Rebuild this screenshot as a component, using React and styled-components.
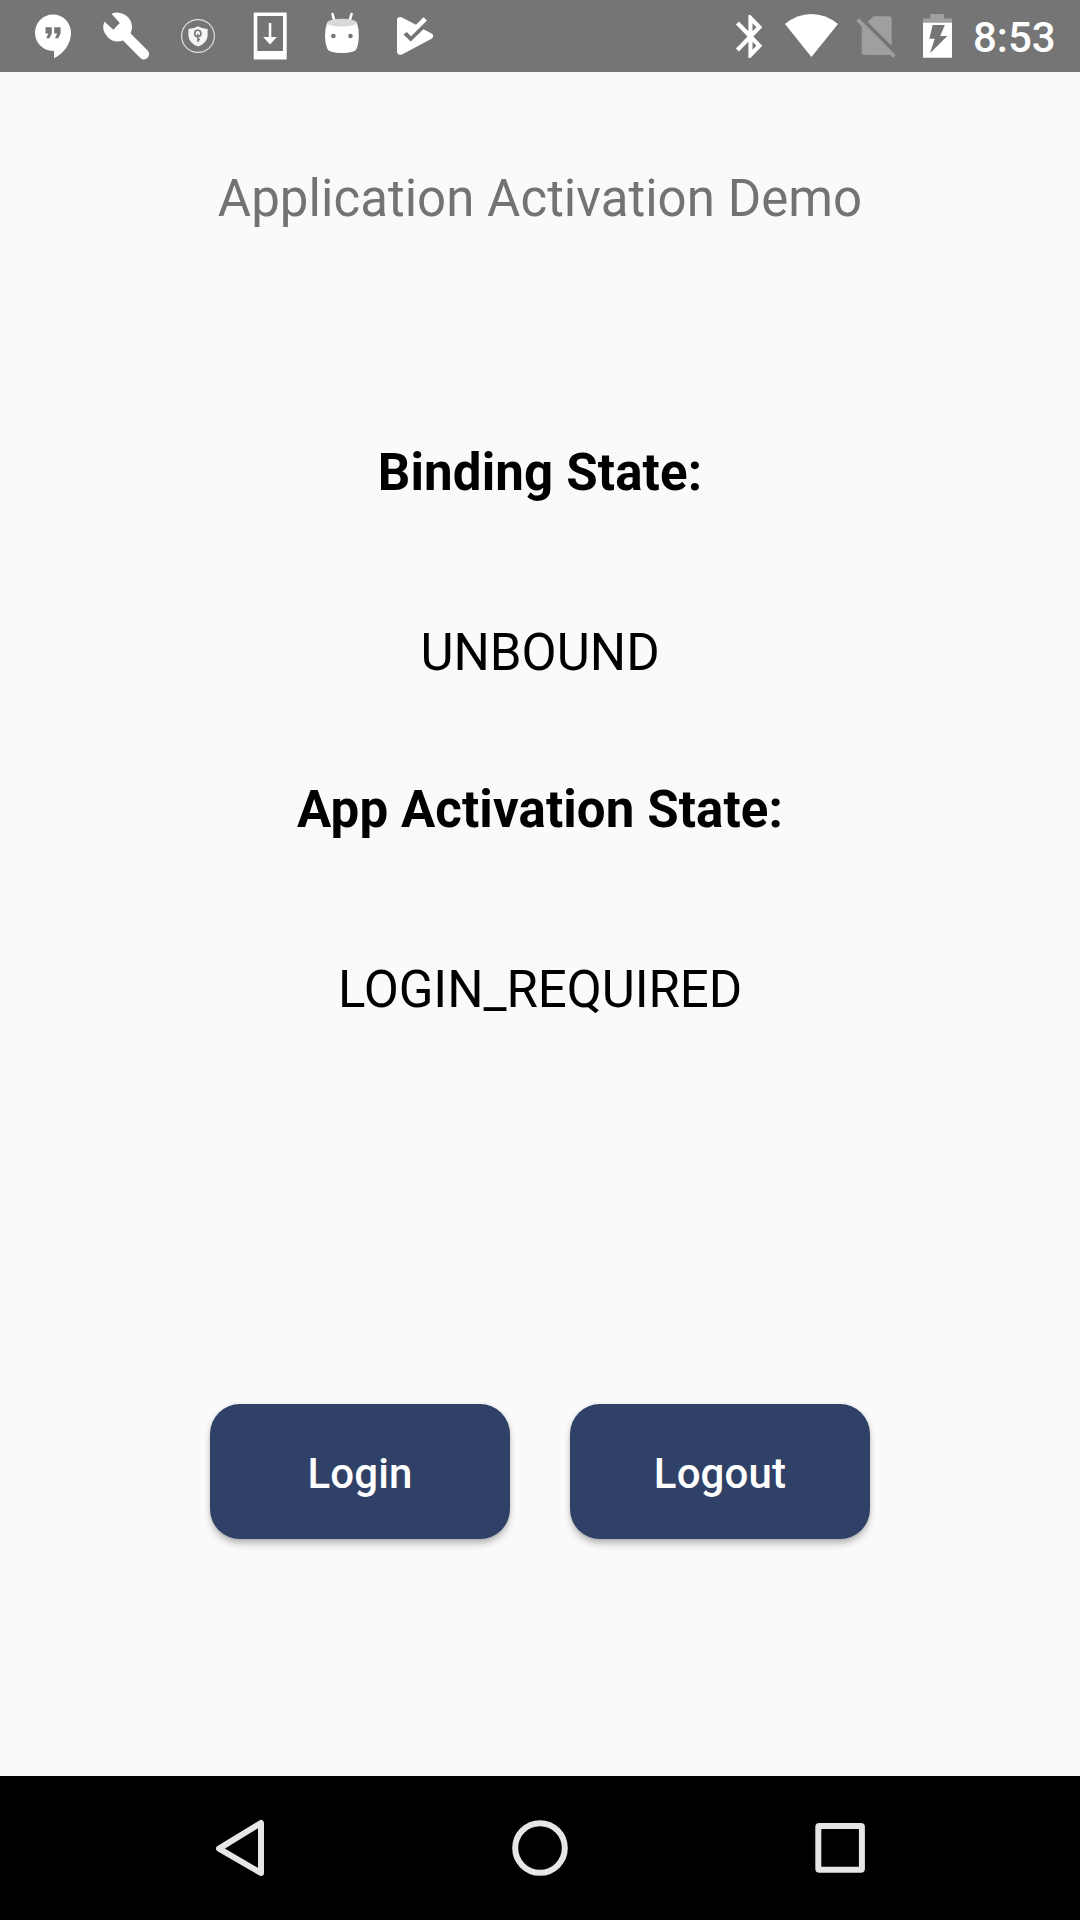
import React from "react";
import styled, { createGlobalStyle } from "styled-components";

const GlobalStyle = createGlobalStyle`
  body { margin: 0; background: #fafafa; }
  *, *::before, *::after { box-sizing: border-box; }
`;

const Screen = styled.div`
  display: flex;
  flex-direction: column;
  width: 1080px;
  height: 1920px;
  background: #fafafa;
  font-family: Roboto, sans-serif;
  overflow: hidden;
`;

const StatusBar = styled.header`
  display: flex;
  align-items: center;
  justify-content: space-between;
  height: 72px;
  padding: 0 26px 0 17px;
  background: #757575;
`;

const IconGroup = styled.div`
  display: flex;
  align-items: center;
`;

const BarIcon = styled.svg`
  display: block;
  flex: none;
  width: ${(p) => p.$w || 72}px;
  height: 72px;
  fill: #fff;
`;

const Clock = styled.time`
  width: 81px;
  margin-left: 14px;
  padding-top: 3px;
  color: #fff;
  font-size: 42px;
  font-weight: 500;
  line-height: 49px;
  white-space: nowrap;
`;

const Content = styled.main`
  flex: 1;
  display: flex;
  flex-direction: column;
  align-items: center;
`;

const Line = styled.p`
  margin: ${(p) => p.$top}px 0 0;
  font-size: 51px;
  line-height: 60px;
  font-weight: ${(p) => (p.$bold ? 700 : 400)};
  letter-spacing: ${(p) => p.$track || 0}px;
  color: ${(p) => p.$color || "#000"};
  white-space: nowrap;
`;

const Actions = styled.div`
  display: flex;
  gap: 60px;
  margin-top: 384px;
`;

const Button = styled.button`
  width: 300px;
  height: 135px;
  padding: 4px 0 0;
  border: 0;
  border-radius: 30px;
  background: #304167;
  color: #fff;
  font: 500 42px/50px Roboto, sans-serif;
  letter-spacing: 0.15px;
  box-shadow: 0 6px 8px -2px rgba(0, 0, 0, 0.28), 0 1px 5px rgba(0, 0, 0, 0.12);
`;

const NavBar = styled.nav`
  display: flex;
  align-items: center;
  justify-content: space-between;
  height: 144px;
  padding: 0 204px;
  background: #000;
`;

const NavIcon = styled.svg`
  display: block;
  width: 72px;
  height: 72px;
  fill: none;
  stroke: #e6e6e6;
  stroke-width: 6;
  stroke-linejoin: round;
`;

export default function App() {
  return (
    <Screen>
      <GlobalStyle />
      <StatusBar>
        <IconGroup>
          <BarIcon viewBox="17 0 72 72">
            <path d="M53 14.6C43 14.6 35 22.8 35 32.8S43 51 53 51H54V58.3C64 53.5 71 43.5 71 32.8C71 22.8 63 14.6 53 14.6Z" />
            <path fill="#757575" d="M45.5 27.3H51.8V33.5L49.4 38.3H46.2L48.4 33.6H45.5ZM54.2 27.3H60.6V33.5L58.2 38.3H55L57.2 33.6H54.2Z" />
          </BarIcon>
          <BarIcon viewBox="89 0 72 72">
            <path d="M111.5 13.8A14.7 14.7 0 0 1 130.6 33.6L147.6 50.6Q150.4 53.8 148 57.5Q144.2 61 140.6 58.2L123 40.6A14.7 14.7 0 0 1 104.3 21.6L113.3 29.8L119.8 23Z" />
          </BarIcon>
          <BarIcon viewBox="161 0 72 72">
            <circle cx="198" cy="36" r="16.4" fill="none" stroke="#e0e0e0" strokeWidth="1.2" />
            <path fill="#f5f5f5" d="M198 26.3Q202.5 29 207.6 29V36Q207 43.2 198 46.6Q189 43.2 188.4 36V29Q193.5 29 198 26.3Z" />
            <circle cx="197.8" cy="33.4" r="3.1" fill="none" stroke="#757575" strokeWidth="1.6" />
            <path fill="none" stroke="#757575" strokeWidth="1.5" d="M197.9 34V42M198 39.6H200" />
          </BarIcon>
          <BarIcon viewBox="233 0 72 72">
            <path fillRule="evenodd" d="M254.5 12.4H286Q286.7 12.4 286.7 13.2V58.8Q286.7 59.6 286 59.6H254.5Q253.7 59.6 253.7 58.8V13.2Q253.7 12.4 254.5 12.4ZM257.3 16V51H283V16Z" />
            <path d="M268.8 23H271.3V37H276.8L270 44.4L263.2 37H268.8Z" />
          </BarIcon>
          <BarIcon viewBox="305 0 72 72">
            <path stroke="#fff" strokeWidth="2.6" strokeLinecap="round" d="M332.5 14L334.5 21.5M351.6 14L349.4 21.5" />
            <path d="M327.3 22.5Q342 28 356.8 22.5Q359 28 358.8 36Q358.8 43 356.8 48.6Q355.5 53 342 53Q328.5 53 327.2 48.6Q325 43 325 36Q325 28 327.3 22.5Z" />
            <ellipse cx="342" cy="22.7" rx="14.8" ry="3.9" fill="#d8d8d8" />
            <circle cx="333.4" cy="36" r="2.3" fill="#757575" />
            <circle cx="350.5" cy="36" r="2.3" fill="#757575" />
          </BarIcon>
          <BarIcon viewBox="377 0 72 72">
            <path d="M397 19Q398 16.4 401.5 17.2L416 24.8L423.6 17.2L427 20.4L411 36.2L406.8 32L403.4 34.6L410.8 41.6L423.4 29.3L432 33.8Q434.4 36 432 38.4L402 54.4Q398 55.5 397 52.5Z" />
          </BarIcon>
        </IconGroup>
        <IconGroup>
          <BarIcon $w={60} viewBox="719 0 60 72">
            <path transform="translate(725.6 10.7) scale(2.07 2.15)" d="M17.71 7.71L12 2h-1v7.59L6.41 5 5 6.41 10.59 12 5 17.59 6.41 19 11 14.41V22h1l5.71-5.71-4.3-4.29 4.3-4.29zM13 5.83l1.88 1.88L13 9.59V5.83zm1.88 10.46L13 18.17v-3.76l1.88 1.88z" />
          </BarIcon>
          <BarIcon $w={64} viewBox="779 0 64 72">
            <path d="M811.4 57L785 24Q797 14 811.4 14T838 24Z" />
          </BarIcon>
          <BarIcon $w={64} viewBox="843 0 64 72">
            <g fill="#9f9f9f">
              <path d="M867.6 22L873.5 16.3H888.8Q891.7 16.3 891.7 19.3V45.8Z" />
              <path d="M859 18.2L895.7 55L893 57.8L890 54.9H864.7Q861.7 54.9 861.7 52V26.4L856.3 21Z" />
            </g>
          </BarIcon>
          <BarIcon $w={52} viewBox="907 0 52 72">
            <path fill="#9f9f9f" d="M930.3 14H944.3V18.4H952V23H923V18.4H930.3Z" />
            <path fillRule="evenodd" d="M923 22.8H952V57.8H923ZM932.7 25L929.3 38.8H934.7L930 53.3L947.3 35.9H940.2L944.8 25Z" />
          </BarIcon>
          <Clock>8:53</Clock>
        </IconGroup>
      </StatusBar>
      <Content>
        <Line $top={97} $track={0.04} $color="#737373">Application Activation Demo</Line>
        <Line $top={214} $track={0.15} $bold>Binding State:</Line>
        <Line $top={120}>UNBOUND</Line>
        <Line $top={97} $track={0.1} $bold>App Activation State:</Line>
        <Line $top={120} $track={-0.08}>LOGIN_REQUIRED</Line>
        <Actions>
          <Button>Login</Button>
          <Button>Logout</Button>
        </Actions>
      </Content>
      <NavBar>
        <NavIcon viewBox="204 1812 72 72">
          <path d="M261 1823V1873L219 1848.6Z" />
        </NavIcon>
        <NavIcon viewBox="504 1812 72 72">
          <circle cx="540" cy="1848" r="24.8" />
        </NavIcon>
        <NavIcon viewBox="804 1812 72 72">
          <rect x="818.3" y="1826" width="43.6" height="43.8" rx="1" />
        </NavIcon>
      </NavBar>
    </Screen>
  );
}
